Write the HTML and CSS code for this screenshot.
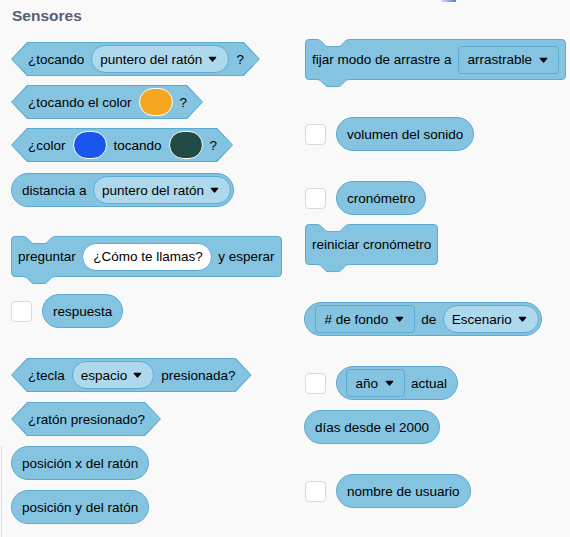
FILE: index.html
```html
<!DOCTYPE html>
<html lang="es">
<head>
<meta charset="utf-8">
<title>Sensores</title>
<link rel="stylesheet" href="styles.css">
</head>
<body>
<div class="palette">
  <span class="scroll-hint"></span>
  <span class="edge-line"></span>
  <h2 class="title">Sensores</h2>
  <div class="cols">
    <div class="col col-left">
      <div class="hex m17"><div class="hex-in">
        <span>¿tocando</span>
        <span class="pill">puntero del ratón<svg class="arrow" viewBox="0 0 9 6"><path d="M1.3 1.3H7.7L4.5 5Z"/></svg></span>
        <span>?</span>
      </div></div>
      <div class="hex m9"><div class="hex-in">
        <span>¿tocando el color</span>
        <span class="swatch orange"></span>
        <span>?</span>
      </div></div>
      <div class="hex m9"><div class="hex-in">
        <span>¿color</span>
        <span class="swatch blue"></span>
        <span>tocando</span>
        <span class="swatch teal"></span>
        <span>?</span>
      </div></div>
      <div class="rep rep-tail m11">
        <span>distancia a</span>
        <span class="pill">puntero del ratón<svg class="arrow" viewBox="0 0 9 6"><path d="M1.3 1.3H7.7L4.5 5Z"/></svg></span>
      </div>
      <div class="stack m29">
        <svg class="notch" viewBox="0 -1 36 10" preserveAspectRatio="none"><path class="f" d="M0 -1V0c2 0 3 1 4 2l4 4c1 1 2 2 4 2h12c2 0 3-1 4-2l4-4c1-1 2-2 4-2V-1Z"/><path class="l" d="M0 0c2 0 3 1 4 2l4 4c1 1 2 2 4 2h12c2 0 3-1 4-2l4-4c1-1 2-2 4-2"/></svg>
        <span>preguntar</span>
        <span class="text-input">¿Cómo te llamas?</span>
        <span>y esperar</span>
        <svg class="tab" viewBox="0 -1 36 10" preserveAspectRatio="none"><path class="f" d="M0 -1V0c2 0 3 1 4 2l4 4c1 1 2 2 4 2h12c2 0 3-1 4-2l4-4c1-1 2-2 4-2V-1Z"/><path class="l" d="M0 0c2 0 3 1 4 2l4 4c1 1 2 2 4 2h12c2 0 3-1 4-2l4-4c1-1 2-2 4-2"/></svg>
      </div>
      <div class="row m17">
        <span class="check"></span>
        <div class="rep"><span>respuesta</span></div>
      </div>
      <div class="hex m30"><div class="hex-in">
        <span>¿tecla</span>
        <span class="pill">espacio<svg class="arrow" viewBox="0 0 9 6"><path d="M1.3 1.3H7.7L4.5 5Z"/></svg></span>
        <span>presionada?</span>
      </div></div>
      <div class="hex m10"><div class="hex-in">
        <span>¿ratón presionado?</span>
      </div></div>
      <div class="rep m10"><span>posición x del ratón</span></div>
      <div class="rep m10"><span>posición y del ratón</span></div>
    </div>

    <div class="col col-right">
      <div class="stack m14">
        <svg class="notch" viewBox="0 -1 36 10" preserveAspectRatio="none"><path class="f" d="M0 -1V0c2 0 3 1 4 2l4 4c1 1 2 2 4 2h12c2 0 3-1 4-2l4-4c1-1 2-2 4-2V-1Z"/><path class="l" d="M0 0c2 0 3 1 4 2l4 4c1 1 2 2 4 2h12c2 0 3-1 4-2l4-4c1-1 2-2 4-2"/></svg>
        <span>fijar modo de arrastre a</span>
        <span class="dd">arrastrable<svg class="arrow" viewBox="0 0 9 6"><path d="M1.3 1.3H7.7L4.5 5Z"/></svg></span>
        <svg class="tab" viewBox="0 -1 36 10" preserveAspectRatio="none"><path class="f" d="M0 -1V0c2 0 3 1 4 2l4 4c1 1 2 2 4 2h12c2 0 3-1 4-2l4-4c1-1 2-2 4-2V-1Z"/><path class="l" d="M0 0c2 0 3 1 4 2l4 4c1 1 2 2 4 2h12c2 0 3-1 4-2l4-4c1-1 2-2 4-2"/></svg>
      </div>
      <div class="row m37">
        <span class="check"></span>
        <div class="rep"><span>volumen del sonido</span></div>
      </div>
      <div class="row m30">
        <span class="check"></span>
        <div class="rep"><span>cronómetro</span></div>
      </div>
      <div class="stack m9">
        <svg class="notch" viewBox="0 -1 36 10" preserveAspectRatio="none"><path class="f" d="M0 -1V0c2 0 3 1 4 2l4 4c1 1 2 2 4 2h12c2 0 3-1 4-2l4-4c1-1 2-2 4-2V-1Z"/><path class="l" d="M0 0c2 0 3 1 4 2l4 4c1 1 2 2 4 2h12c2 0 3-1 4-2l4-4c1-1 2-2 4-2"/></svg>
        <span>reiniciar cronómetro</span>
        <svg class="tab" viewBox="0 -1 36 10" preserveAspectRatio="none"><path class="f" d="M0 -1V0c2 0 3 1 4 2l4 4c1 1 2 2 4 2h12c2 0 3-1 4-2l4-4c1-1 2-2 4-2V-1Z"/><path class="l" d="M0 0c2 0 3 1 4 2l4 4c1 1 2 2 4 2h12c2 0 3-1 4-2l4-4c1-1 2-2 4-2"/></svg>
      </div>
      <div class="rep rep-tail m37">
        <span class="dd"># de fondo<svg class="arrow" viewBox="0 0 9 6"><path d="M1.3 1.3H7.7L4.5 5Z"/></svg></span>
        <span>de</span>
        <span class="pill">Escenario<svg class="arrow" viewBox="0 0 9 6"><path d="M1.3 1.3H7.7L4.5 5Z"/></svg></span>
      </div>
      <div class="row m30">
        <span class="check"></span>
        <div class="rep rep-lead">
          <span class="dd">año<svg class="arrow" viewBox="0 0 9 6"><path d="M1.3 1.3H7.7L4.5 5Z"/></svg></span>
          <span>actual</span>
        </div>
      </div>
      <div class="rep m10"><span>días desde el 2000</span></div>
      <div class="row m30">
        <span class="check"></span>
        <div class="rep"><span>nombre de usuario</span></div>
      </div>
    </div>
  </div>
</div>
</body>
</html>
```

FILE: styles.css
```css
* { box-sizing: border-box; }

html, body { margin: 0; }

body {
  background: #f9f9f9;
  font-family: "Liberation Sans", Arial, Helvetica, sans-serif;
  font-size: 13.5px;
  color: #000;
  overflow: hidden;
}

.palette {
  position: relative;
  height: 537px;
  padding-left: 11px;
}

.scroll-hint {
  position: absolute;
  top: 0;
  left: 441px;
  width: 15px;
  height: 2px;
  background: linear-gradient(90deg, #d3dbf5, #5d7be4);
}

.edge-line {
  position: absolute;
  left: 1px;
  top: 446px;
  bottom: 0;
  width: 1px;
  background: #dcdcdc;
}

.title {
  margin: 0;
  padding: 7px 0 0 1px;
  font-size: 15.5px;
  line-height: 18px;
  font-weight: bold;
  color: #575e75;
}

.cols { display: flex; }

.col {
  display: flex;
  flex-direction: column;
  align-items: flex-start;
}

.col-left { width: 293px; }

.m9 { margin-top: 9px; }
.m10 { margin-top: 10px; }
.m11 { margin-top: 11px; }
.m14 { margin-top: 14px; }
.m17 { margin-top: 17px; }
.m29 { margin-top: 29px; }
.m30 { margin-top: 30px; }
.m37 { margin-top: 37px; }

/* boolean (hexagon) blocks */
.hex {
  padding: 1px;
  background: #5dabd3;
  clip-path: polygon(0 50%, 16px 0, calc(100% - 16px) 0, 100% 50%, calc(100% - 16px) 100%, 16px 100%);
}

.hex-in {
  height: 32px;
  display: flex;
  align-items: center;
  gap: 7px;
  padding: 0 15px 0 16px;
  background: #85c4e0;
  white-space: nowrap;
  clip-path: polygon(0 50%, 16px 0, calc(100% - 16px) 0, 100% 50%, calc(100% - 16px) 100%, 16px 100%);
}

/* reporter blocks */
.rep {
  height: 34px;
  display: inline-flex;
  align-items: center;
  gap: 6.5px;
  padding: 0 10px;
  border: 1px solid #5dabd3;
  border-radius: 17px;
  background: #85c4e0;
  white-space: nowrap;
}

.rep-tail { padding-right: 2px; }
.rep-lead { padding-left: 9px; }

/* stack blocks */
.stack {
  position: relative;
  height: 41px;
  display: flex;
  align-items: center;
  gap: 6.5px;
  padding: 0 6px;
  border: 1px solid #5dabd3;
  border-radius: 4px;
  background: #85c4e0;
  white-space: nowrap;
}

.col-right .stack { margin-left: 1px; }

.notch, .tab {
  position: absolute;
  left: 12.4px;
  width: 30.24px;
  height: 8.4px;
  overflow: visible;
}

.notch { top: -1.34px; }
.tab { top: calc(100% - 0.34px); }

.notch .f { fill: #f9f9f9; }
.tab .f { fill: #85c4e0; }

.notch .l, .tab .l {
  fill: none;
  stroke: #5dabd3;
  stroke-width: 1;
  vector-effect: non-scaling-stroke;
}

/* inputs */
.pill {
  height: 28px;
  display: inline-flex;
  align-items: center;
  gap: 6px;
  padding: 0 11px 0 8px;
  border: 1px solid #5dabd3;
  border-radius: 14px;
  background: #aed8ec;
}

.dd {
  height: 28px;
  display: inline-flex;
  align-items: center;
  gap: 6.5px;
  padding: 0 10px 0 8.5px;
  border: 1px solid #5dabd3;
  border-radius: 4px;
  background: #85c4e0;
}

.text-input {
  height: 28px;
  display: inline-flex;
  align-items: center;
  padding: 0 8px 0 10px;
  border: 1px solid #5dabd3;
  border-radius: 14px;
  background: #ffffff;
}

.swatch {
  width: 34px;
  height: 28px;
  border-radius: 14px;
  border: 1px solid #ffffff;
  flex: none;
}

.orange { background: #f5a623; }
.blue { background: #1a55ec; }
.teal { background: #224b46; }

.arrow {
  width: 9px;
  height: 6px;
  flex: none;
}

.arrow path {
  fill: #000;
  stroke: #000;
  stroke-width: 1.2;
  stroke-linejoin: round;
}

/* checkbox rows */
.row {
  display: flex;
  align-items: center;
  gap: 10px;
}

.col-right .row { padding-left: 1px; }

.check {
  width: 21px;
  height: 21px;
  flex: none;
  background: #ffffff;
  border: 1px solid #d9d9d9;
  border-radius: 4px;
}
```
